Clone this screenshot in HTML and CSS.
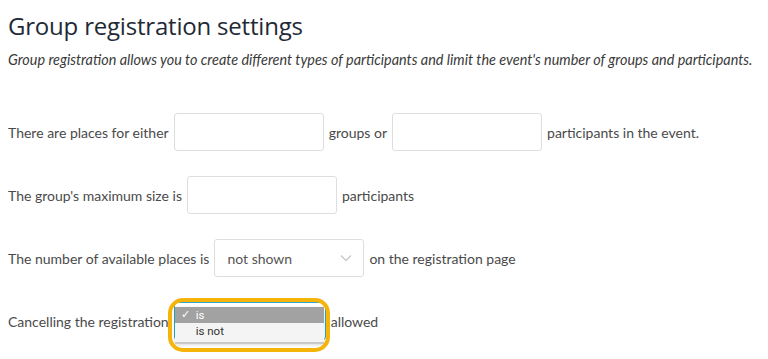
FILE: index.html
```html
<!DOCTYPE html>
<html lang="en">
<head>
    <meta charset="UTF-8">
    <title>Group registration settings</title>
    <link rel="stylesheet" href="styles.css">
</head>
<body>
    <div class="page">
        <h1 class="title">Group registration settings</h1>
        <p class="lead">Group registration allows you to create different types of participants and limit the event's number of groups and participants.</p>

        <div class="settings">
            <div class="row">
                <span>There are places for either</span>
                <input class="field" type="text">
                <span>groups or</span>
                <input class="field" type="text">
                <span>participants in the event.</span>
            </div>

            <div class="row">
                <span>The group's maximum size is</span>
                <input class="field field-size" type="text">
                <span>participants</span>
            </div>

            <div class="row">
                <span>The number of available places is</span>
                <div class="field select">
                    <span>not shown</span>
                    <svg class="chevron" width="12" height="8" viewBox="0 0 12 8"><path d="M1 1.5 L6 6.5 L11 1.5" fill="none" stroke="#c8c8c8" stroke-width="1.3"/></svg>
                </div>
                <span>on the registration page</span>
            </div>

            <div class="row">
                <span>Cancelling the registration</span>
                <div class="select-wrap">
                    <div class="field select select-open"></div>
                    <ul class="dropdown">
                        <li class="option option-selected"><span class="check">&#10003;</span>is</li>
                        <li class="option">is not</li>
                    </ul>
                    <div class="callout"></div>
                </div>
                <span>allowed</span>
            </div>
        </div>
    </div>
</body>
</html>
```

FILE: styles.css
```css
/* base */
body {
    margin: 0;
    background: #fff;
    font-family: 'Lato', 'Open Sans', sans-serif;
    color: #4a4a4a;
}

.page {
    padding: 0 8px;
}

/* heading */
.title {
    margin: 11px 0 0;
    font-family: 'Open Sans', sans-serif;
    font-weight: 400;
    font-size: 24px;
    line-height: 30px;
    color: #1f2a36;
    letter-spacing: -0.2px;
}
.lead {
    margin: 10px 0 0;
    font-style: italic;
    font-size: 14.4px;
    line-height: 18px;
    color: #3a3a3a;
}

/* rows */
.settings {
    margin-top: 44px;
}
.row {
    display: flex;
    align-items: center;
    gap: 4px;
    height: 38px;
    margin-bottom: 25px;
    font-size: 14px;
}

.field {
    box-sizing: border-box;
    width: 150px;
    height: 38px;
    margin: 0 1px;
    border: 1px solid #dedede;
    border-radius: 3px;
    background: #fff;
    font: inherit;
}

.select {
    display: flex;
    align-items: center;
    justify-content: space-between;
    padding: 0 11px 0 12px;
    font-size: 14px;
    color: #555;
}

/* open select with its list */
.select-wrap {
    position: relative;
}
.select-open {
    width: 152px;
    border-color: #2aa7c9;
}
.dropdown {
    position: absolute;
    top: 5px;
    left: 2px;
    width: 149px;
    margin: 0;
    padding: 0 0 3px;
    list-style: none;
    background: #f4f4f4;
    border-bottom: 2px solid #c9c9c9;
    box-shadow: 0 1px 3px rgba(0,0,0,0.15);
    font-family: 'Roboto', sans-serif;
    font-size: 11.5px;
}
.option {
    height: 16px;
    line-height: 16px;
    padding-left: 21px;
    position: relative;
    color: #333;
}
.option-selected {
    background: #a2a2a2;
    color: #fff;
}
.check {
    position: absolute;
    left: 6px;
    font-size: 11px;
}

/* highlight ring */
.callout {
    position: absolute;
    top: -4px;
    left: -5px;
    width: 154px;
    height: 46px;
    border: 4px solid #f5b40a;
    border-radius: 15px;
}
```
